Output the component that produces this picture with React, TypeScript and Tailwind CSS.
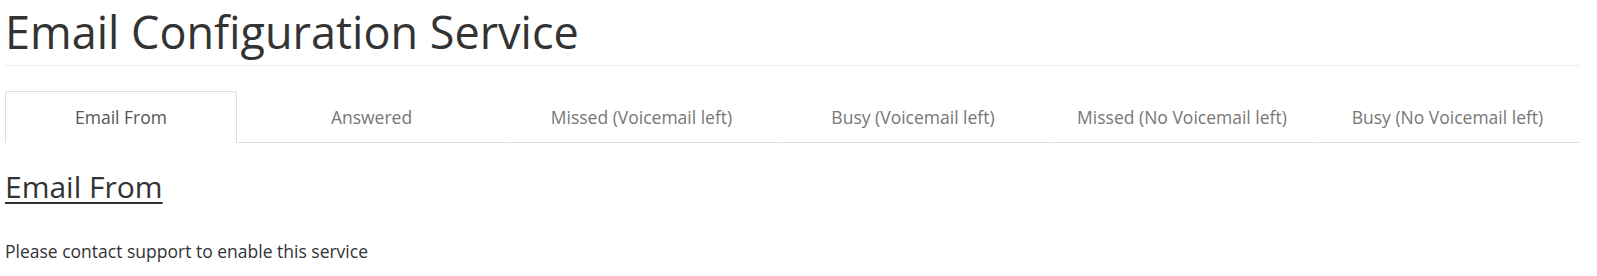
const tabs = [
  { label: 'Email From', w: 'w-[232px]' },
  { label: 'Answered', w: 'w-[269px]' },
  { label: 'Missed (Voicemail left)', w: 'w-[271px]' },
  { label: 'Busy (Voicemail left)', w: 'w-[272px]' },
  { label: 'Missed (No Voicemail left)', w: 'w-[266px]' },
  { label: 'Busy (No Voicemail left)', w: 'w-[265px]' },
]

export default function App() {
  return (
    <div className="min-h-screen bg-white px-[5px] font-['Open_Sans',sans-serif] text-[#333]">
      <div className="w-[1575px]">
        {/* Page header */}
        <div className="border-b border-[#eee] pb-[8px] pt-[6px]">
          <h1 className="text-[45px] leading-[51px] font-normal">Email Configuration Service</h1>
        </div>

        {/* Tabs */}
        <ul className="mt-[25px] flex">
          {tabs.map((t, i) => (
            <li key={t.label} className={t.w}>
              {i === 0 ? (
                <a className="block rounded-t-[4px] border border-b-transparent border-[#ddd] py-[12px] text-center text-[17.5px] leading-[26px] text-[#555]">
                  {t.label}
                </a>
              ) : (
                <a className="block rounded-t-[4px] border border-x-transparent border-t-transparent border-b-[#ddd] py-[12px] text-center text-[17.5px] leading-[26px] text-[#777]">
                  {t.label}
                </a>
              )}
            </li>
          ))}
        </ul>

        {/* Tab content */}
        <div className="pt-[27px]">
          <h3 className="text-[30px] leading-[1.1] underline decoration-2 underline-offset-[4px]">Email From</h3>
          <p className="mt-[36px] text-[17.5px] leading-[24px]">Please contact support to enable this service</p>
        </div>
      </div>
    </div>
  )
}
